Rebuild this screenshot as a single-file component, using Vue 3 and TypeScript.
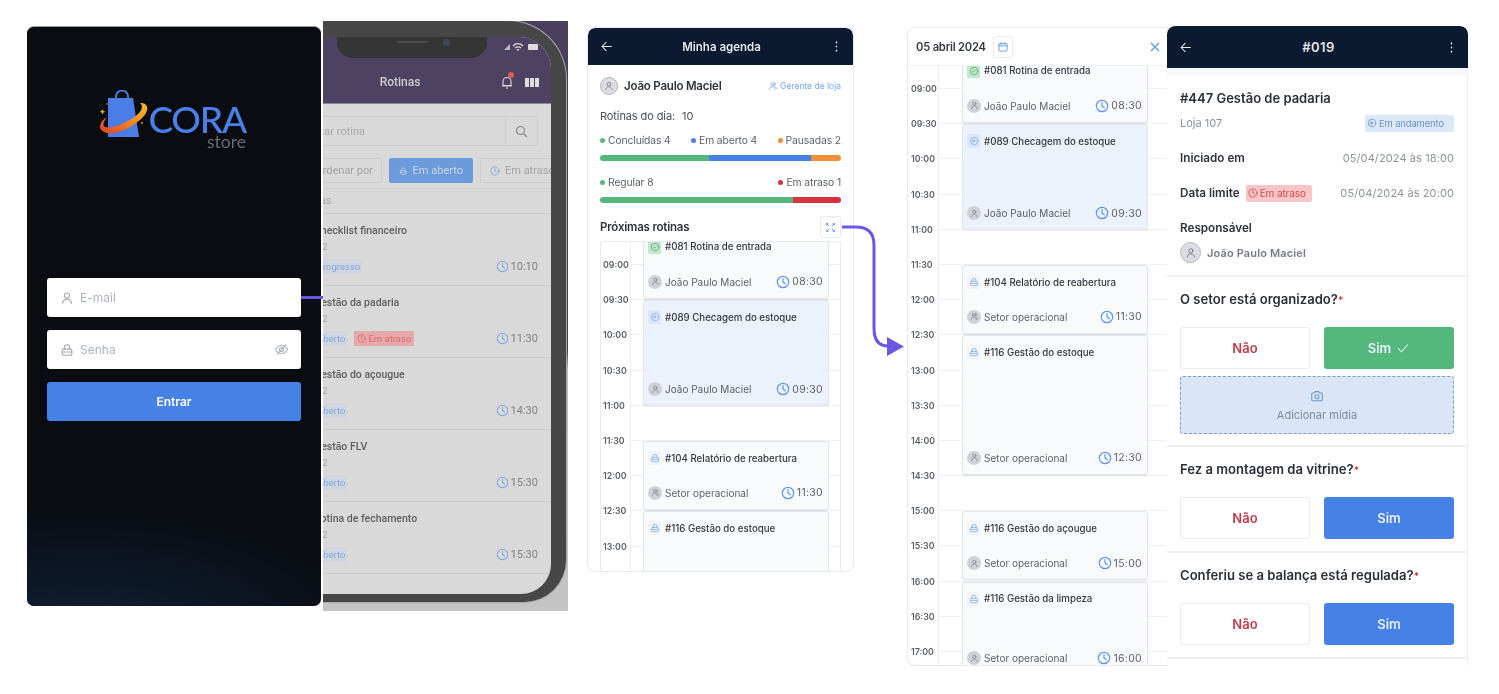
<script setup lang="ts">
interface Ev { start: number; end: number; icon: string; tone: string; title: string; who: string; time: string; av: string }

const slot = 35.2

const agendaTimes = ['09:00','09:30','10:00','10:30','11:00','11:30','12:00','12:30','13:00']
const calTimes = ['09:00','09:30','10:00','10:30','11:00','11:30','12:00','12:30','13:00','13:30','14:00','14:30','15:00','15:30','16:00','16:30','17:00']

const agendaEvents: Ev[] = [
  { start: -1, end: 1, icon: 'i-check', tone: 'green', title: '#081 Rotina de entrada', who: 'João Paulo Maciel', time: '08:30', av: 'i-user' },
  { start: 1, end: 4.06, icon: 'i-play', tone: 'blue', title: '#089 Checagem do estoque', who: 'João Paulo Maciel', time: '09:30', av: 'i-user' },
  { start: 5, end: 7, icon: 'i-lock', tone: 'plain', title: '#104 Relatório de reabertura', who: 'Setor operacional', time: '11:30', av: 'i-team' },
  { start: 7, end: 11, icon: 'i-lock', tone: 'plain', title: '#116 Gestão do estoque', who: '', time: '', av: '' }
]
const calEvents: Ev[] = [
  ...agendaEvents.slice(0, 3),
  { start: 7, end: 11, icon: 'i-lock', tone: 'plain', title: '#116 Gestão do estoque', who: 'Setor operacional', time: '12:30', av: 'i-user' },
  { start: 12, end: 14, icon: 'i-lock', tone: 'plain', title: '#116 Gestão do açougue', who: 'Setor operacional', time: '15:00', av: 'i-user' },
  { start: 14, end: 16.7, icon: 'i-lock', tone: 'plain', title: '#116 Gestão da limpeza', who: 'Setor operacional', time: '16:00', av: 'i-user' }
]

function evStyle(e: Ev, offset: number) {
  return { top: `${offset + e.start * slot + 1}px`, height: `${(e.end - e.start) * slot - 1.6}px` }
}

const phoneRows = [
  { title: 'Checklist financeiro', badge: 'Progresso', late: false, time: '10:10' },
  { title: 'Gestão da padaria', badge: 'Aberto', late: true, time: '11:30' },
  { title: 'Gestão do açougue', badge: 'Aberto', late: false, time: '14:30' },
  { title: 'Gestão FLV', badge: 'Aberto', late: false, time: '15:30' },
  { title: 'Rotina de fechamento', badge: 'Aberto', late: false, time: '15:30' }
]

const questions = [
  { q: 'O setor está organizado?', done: true, h: 170 },
  { q: 'Fez a montagem da vitrine?', done: false, h: 106 },
  { q: 'Conferiu se a balança está regulada?', done: false, h: 106 }
]
</script>

<template>
  <div class="canvas">
    <svg class="defs" width="0" height="0" aria-hidden="true">
      <symbol id="i-user" viewBox="0 0 16 16"><circle cx="8" cy="5.2" r="2.9"/><path d="M2.8 14c.4-3 2.5-4.6 5.2-4.6s4.8 1.6 5.2 4.6"/></symbol>
      <symbol id="i-team" viewBox="0 0 16 16"><circle cx="7" cy="5.2" r="2.6"/><path d="M2.5 13.5c.3-2.7 2-4.2 4.5-4.2s4.2 1.5 4.5 4.2M10.5 3a2.5 2.5 0 0 1 0 4.6M12 9.5c1.2.6 1.9 1.9 2 3.5"/></symbol>
      <symbol id="i-lock" viewBox="0 0 16 16"><rect x="2.5" y="7" width="11" height="7" rx="1.5"/><path d="M5 7V5a3 3 0 0 1 6 0v2M2.5 10.3h11"/></symbol>
      <symbol id="i-clock" viewBox="0 0 16 16"><circle cx="8" cy="8" r="6.5"/><path d="M8 4.2V8l2.6 2"/></symbol>
      <symbol id="i-check" viewBox="0 0 16 16"><circle cx="8" cy="8" r="6"/><path d="M5.4 8.2l1.8 1.8 3.4-3.6"/></symbol>
      <symbol id="i-play" viewBox="0 0 16 16"><circle cx="8" cy="8" r="6"/><path d="M6.8 5.8l3.2 2.2-3.2 2.2z"/></symbol>
      <symbol id="i-back" viewBox="0 0 16 16"><path d="M14 8H2.5M7.5 3l-5 5 5 5"/></symbol>
      <symbol id="i-more" viewBox="0 0 16 16"><path d="M8 2.5v.8M8 7.6v.8M8 12.7v.8"/></symbol>
      <symbol id="i-expand" viewBox="0 0 16 16"><path d="M2.5 2.5l3 3M2.5 2.5h2M2.5 2.500v2M13.500 2.500l-3 3M13.500 2.500h-2M13.500 2.500v2M2.500 13.500l3-3M2.500 13.500h2M2.500 13.500v-2M13.500 13.500l-3-3M13.500 13.500h-2M13.500 13.500v-2"/></symbol>
    </svg>

    <!-- Login -->
    <section class="login">
      <div class="logo">
        <svg class="logo-mark" width="60" height="50" viewBox="0 0 60 50">
          <defs>
            <linearGradient id="sw" x1="0" x2="1" y1="1" y2="0">
              <stop offset="0" stop-color="#e2402c"/>
              <stop offset=".55" stop-color="#f08a25"/>
              <stop offset="1" stop-color="#f6bf2a"/>
            </linearGradient>
          </defs>
          <path d="M21 9V6.5a6 6 0 0 1 12 0V9" fill="none" stroke="#4a7fe8" stroke-width="1.8"/>
          <path d="M13 8h25l6 39H13z" fill="#4a7de6"/>
          <path d="M12 27C5 31 2 39 9 42C17 46 32 40 41 33C50 27 55 19 51 15C49 13 47 13 45 13C49 16 47 22 38 28C29 34 16 39 10 37C7 35 9 31 12 27z" fill="url(#sw)"/>
          <path d="M7.5 19l.8 2 2 .8-2 .8-.8 2-.8-2-2-.8 2-.8z" fill="#f6bf2a"/>
          <circle cx="12" cy="14" r=".8" fill="#f08a25"/>
          <circle cx="47" cy="33" r="1" fill="#c89a2a"/>
        </svg>
        <div class="logo-text">
          <span class="cora">CORA</span>
          <span class="store">store</span>
        </div>
      </div>
      <div class="login-form">
        <div class="field">
          <svg class="ico field-ico"><use href="#i-user"/></svg>
          <span>E-mail</span>
        </div>
        <div class="field">
          <svg class="ico field-ico"><use href="#i-lock"/></svg>
          <span>Senha</span>
          <svg class="eye" viewBox="0 0 16 16"><path d="M1.5 8S4 3.8 8 3.8 14.5 8 14.5 8 12 12.2 8 12.2 1.5 8 1.5 8z"/><circle cx="8" cy="8" r="2.2"/><path d="M13 2.5L3 13.5"/></svg>
        </div>
        <button class="enter">Entrar</button>
      </div>
    </section>

    <!-- Phone mock-up -->
    <section class="phone">
      <div class="frame">
        <div class="notch"><i class="speaker"></i><i class="cam"></i></div>
        <div class="screen">
          <header class="p-head">
            <div class="p-status">
              <svg width="38" height="10" viewBox="0 0 38 10"><path d="M1 8l6-6v6z" fill="#bbb"/><path d="M10 4c3-3 7-3 10 0M12 6c2-1.5 4-1.5 6 0" stroke="#ddd" stroke-width="1.4" fill="none"/><path d="M15 9l-1.6-1.6c1-.7 2.2-.7 3.2 0z" fill="#ddd"/><rect x="25" y="2" width="10" height="6" rx="1" fill="#ddd"/></svg>
            </div>
            <div class="p-bar">
              <span class="p-title">Rotinas</span>
              <span class="p-actions">
                <span class="bell">
                  <svg width="12" height="14" viewBox="0 0 12 14"><path d="M2 10.5V6.5a4 4 0 0 1 8 0v4zM1 11h10M5 13h2" fill="none" stroke="#ddd" stroke-width="1.1"/></svg>
                  <i></i>
                </span>
                <span class="bars"><i></i><i></i><i></i></span>
              </span>
            </div>
          </header>
          <div class="p-search">
            <span class="p-search-text">Buscar rotina</span>
            <span class="p-search-btn"><svg width="13" height="13" viewBox="0 0 13 13"><circle cx="5.5" cy="5.5" r="4" fill="none" stroke="#888" stroke-width="1.2"/><path d="M8.5 8.5l3.5 3.5" stroke="#888" stroke-width="1.2"/></svg></span>
          </div>
          <div class="p-filters">
            <span class="chip order">Ordenar por</span>
            <span class="chip active"><svg class="ico chip-ico"><use href="#i-lock"/></svg>Em aberto</span>
            <span class="chip"><svg class="ico chip-ico c-blue"><use href="#i-clock"/></svg>Em atraso</span>
          </div>
          <div class="p-section">Rotinas</div>
          <article v-for="r in phoneRows" :key="r.title" class="p-row">
            <div class="p-row-title">{{ r.title }}</div>
            <div class="p-row-sub">02</div>
            <div class="p-row-foot">
              <span class="p-badge">{{ r.badge }}</span>
              <span v-if="r.late" class="p-late"><svg class="ico chip-ico"><use href="#i-clock"/></svg>Em atraso</span>
              <span class="p-time"><svg class="ico p-clock"><use href="#i-clock"/></svg>{{ r.time }}</span>
            </div>
          </article>
        </div>
      </div>
    </section>

    <!-- Agenda -->
    <section class="agenda">
      <header class="nav nav-s">
        <svg class="ico nav-ico"><use href="#i-back"/></svg>
        <span class="nav-title">Minha agenda</span>
        <svg class="ico nav-ico more"><use href="#i-more"/></svg>
      </header>
      <div class="ag-body">
        <div class="ag-user">
          <span class="avatar av-18"><svg class="ico"><use href="#i-user"/></svg></span>
          <strong>João Paulo Maciel</strong>
          <span class="role"><svg class="ico role-ico"><use href="#i-team"/></svg>Gerente de loja</span>
        </div>
        <div class="ag-count"><span>Rotinas do dia:</span><span>10</span></div>
        <div class="legend ag-l1">
          <span><i class="dot green"></i>Concluídas 4</span>
          <span><i class="dot blue"></i>Em aberto 4</span>
          <span><i class="dot orange"></i>Pausadas 2</span>
        </div>
        <div class="bar">
          <i class="green" style="width:45.2%"></i>
          <i class="blue" style="width:42.5%"></i>
          <i class="orange" style="width:12.3%"></i>
        </div>
        <div class="legend ag-l2">
          <span><i class="dot green"></i>Regular 8</span>
          <span><i class="dot red"></i>Em atraso 1</span>
        </div>
        <div class="bar">
          <i class="green" style="width:80%"></i>
          <i class="red" style="width:20%"></i>
        </div>
        <div class="ag-next">
          <strong>Próximas rotinas</strong>
          <span class="exp"><svg class="ico"><use href="#i-expand"/></svg></span>
        </div>
        <div class="timeline tl-agenda">
          <div class="tl-rows">
            <div v-for="t in agendaTimes" :key="t" class="tl-row"><span class="tl-label">{{ t }}</span></div>
          </div>
          <article v-for="e in agendaEvents" :key="e.title" class="ev" :class="e.tone" :style="evStyle(e, 22)">
            <div class="ev-top">
              <span class="ev-ico" :class="e.tone"><svg class="ico"><use :href="'#' + e.icon"/></svg></span>
              <span class="ev-title">{{ e.title }}</span>
            </div>
            <div v-if="e.who" class="ev-foot">
              <span class="avatar av-14"><svg class="ico"><use :href="'#' + e.av"/></svg></span>
              <span class="ev-who">{{ e.who }}</span>
              <svg class="ico ev-clock"><use href="#i-clock"/></svg>
              <span class="ev-time">{{ e.time }}</span>
            </div>
          </article>
        </div>
      </div>
    </section>

    <!-- Calendar -->
    <section class="calendar">
      <header class="cal-head">
        <strong>05 abril 2024</strong>
        <span class="cal-btn">
          <svg class="ico" viewBox="0 0 16 16"><rect x="2.5" y="3.5" width="11" height="10" rx="1.5"/><path d="M2.5 6.5h11M5.5 2v2.5M10.5 2v2.5"/></svg>
        </span>
        <svg class="cal-x" viewBox="0 0 12 12"><path d="M2 2l8 8M10 2l-8 8"/></svg>
      </header>
      <div class="timeline tl-cal">
        <div class="tl-rows">
          <div v-for="t in calTimes" :key="t" class="tl-row"><span class="tl-label">{{ t }}</span></div>
        </div>
        <article v-for="e in calEvents" :key="e.title" class="ev" :class="e.tone" :style="evStyle(e, 23)">
          <div class="ev-top">
            <span class="ev-ico" :class="e.tone"><svg class="ico"><use :href="'#' + e.icon"/></svg></span>
            <span class="ev-title">{{ e.title }}</span>
          </div>
          <div class="ev-foot">
            <span class="avatar av-14"><svg class="ico"><use :href="'#' + e.av"/></svg></span>
            <span class="ev-who">{{ e.who }}</span>
            <svg class="ico ev-clock"><use href="#i-clock"/></svg>
            <span class="ev-time">{{ e.time }}</span>
          </div>
        </article>
      </div>
    </section>

    <!-- Detail -->
    <section class="detail">
      <header class="nav nav-l">
        <svg class="ico nav-ico"><use href="#i-back"/></svg>
        <span class="nav-title mono">#019</span>
        <svg class="ico nav-ico more"><use href="#i-more"/></svg>
      </header>
      <div class="d-info">
        <h2>#447 Gestão de padaria</h2>
        <div class="d-line d-loja">
          <span class="muted">Loja 107</span>
          <span class="tag tag-blue"><svg class="ico tag-ico"><use href="#i-play"/></svg>Em andamento</span>
        </div>
        <div class="d-line d-date">
          <b>Iniciado em</b>
          <span class="muted date">05/04/2024 às 18:00</span>
        </div>
        <div class="d-line d-date">
          <span class="d-lim"><b>Data limite</b><span class="tag tag-red"><svg class="ico tag-ico"><use href="#i-clock"/></svg>Em atraso</span></span>
          <span class="muted date">05/04/2024 às 20:00</span>
        </div>
        <div class="d-resp"><b>Responsável</b></div>
        <div class="d-person">
          <span class="avatar av-21"><svg class="ico"><use href="#i-user"/></svg></span>
          <span>João Paulo Maciel</span>
        </div>
      </div>
      <div v-for="q in questions" :key="q.q" class="q" :style="{ height: q.h + 'px' }">
        <div class="q-title">{{ q.q }}<em>*</em></div>
        <div class="q-btns">
          <button class="no">Não</button>
          <button class="yes" :class="{ done: q.done }">Sim<svg v-if="q.done" class="sim-check" viewBox="0 0 16 16"><path d="M2.5 8.5l3.8 3.8L13.5 4"/></svg></button>
        </div>
        <div v-if="q.done" class="media">
          <svg class="cam-ico" viewBox="0 0 16 16"><path d="M2 5.5A1 1 0 0 1 3 4.5h2l1-1.5h4l1 1.5h2a1 1 0 0 1 1 1v7a1 1 0 0 1-1 1H3a1 1 0 0 1-1-1z"/><circle cx="8" cy="8.8" r="2.3"/></svg>
          <span>Adicionar mídia</span>
        </div>
      </div>
    </section>

    <!-- Flow connectors -->
    <svg class="flow" width="1499" height="694" viewBox="0 0 1499 694" aria-hidden="true">
      <path d="M301 297.5H323" fill="none" stroke="#6a58e2" stroke-width="3"/>
      <path d="M842 227H856Q874 227 874 245V328Q874 346 888 346" fill="none" stroke="#6a58e2" stroke-width="3"/>
      <path d="M887 337L904 346.5 887 356z" fill="#6a58e2"/>
    </svg>
  </div>
</template>

<style>
html, body { margin: 0; background: #fff; }
</style>

<style scoped>
.canvas {
  position: relative;
  width: 1499px;
  height: 694px;
  overflow: hidden;
  background: #fff;
  font-family: Inter, "Noto Sans", "Liberation Sans", sans-serif;
  color: #2b2f38;
}
.defs { position: absolute; }
.ico { fill: none; stroke: currentColor; stroke-width: 1.3; stroke-linecap: round; stroke-linejoin: round; }
button { font-family: inherit; cursor: pointer; }
.flow { position: absolute; left: 0; top: 0; pointer-events: none; }

/* login */
.login {
  position: absolute; left: 27px; top: 26px; width: 294px; height: 580px;
  box-sizing: border-box; border-radius: 7px;
  border-top: 1px solid #999;
  background:
    radial-gradient(ellipse 300px 130px at 20% 105%, #0f2136 0%, rgba(12, 22, 38, 0) 100%),
    #0a0c12;
  display: flex; flex-direction: column; filter: blur(.35px);
}
.logo { display: flex; margin: 63px 0 0 68px; height: 62px; }
.logo-mark { flex: none; }
.logo-text { margin-left: -2px; margin-top: 13px; display: flex; flex-direction: column; align-items: flex-end; width: 93px; }
.cora { font-family: Lato, sans-serif; font-size: 37px; line-height: 31px; color: #4a7fe8; letter-spacing: -1.2px; font-weight: 500; white-space: nowrap; }
.store { font-family: Lato, sans-serif; font-size: 17.5px; line-height: 16px; color: #666a74; }
.login-form { margin: 126px 20px 0 20px; display: flex; flex-direction: column; }
.field {
  height: 39px; border-radius: 3px; background: #fff; display: flex; align-items: center;
  padding: 0 12px 0 13px; margin-bottom: 13px; color: #aeb2bc; font-size: 12px;
}
.field-ico { width: 14px; height: 14px; margin-right: 6px; color: #a5a9b4; }
.eye { width: 15px; height: 15px; margin-left: auto; fill: none; stroke: #b0b3bc; stroke-width: 1.1; }
.enter { height: 39px; border: 0; border-radius: 3px; background: #4681e6; color: #fff; font-size: 12px; font-weight: 600; }

/* phone */
.phone {
  position: absolute; left: 323px; top: 21px; width: 245px; height: 590px; overflow: hidden;
  background: linear-gradient(#4a3f5c 0, #4a3f5c 56%, #bdbdbd 59%, #c4c4c4 100%);
  filter: blur(.5px);
}
.frame {
  position: absolute; left: -40px; top: 0; width: 283px; height: 581px; box-sizing: border-box;
  padding: 16px 15px 8px 0; background: #474747;
  border-radius: 0 58px 42px 0; box-shadow: 0 0 0 1px #aaa;
}
.notch {
  position: absolute; left: 54px; top: 16px; width: 150px; height: 21px; z-index: 2;
  background: #353535; border-radius: 0 0 16px 16px;
  display: flex; align-items: flex-start; gap: 15px; padding: 2px 0 0 60px; box-sizing: border-box;
}
.speaker { width: 31px; height: 2px; margin-top: 2px; background: #4c4c4c; border-radius: 2px; }
.cam { width: 7px; height: 7px; background: #3c4858; border-radius: 50%; }
.screen { height: 100%; width: 268px; background: #d9d9d9; border-radius: 0 32px 30px 0; overflow: hidden; font-family: Roboto, Inter, sans-serif; color: #5a5a5a; }
.p-head { height: 67px; background: #4e4262; display: flex; flex-direction: column; border-bottom: 1px solid #8a8a94; box-sizing: border-box; }
.p-status { height: 21px; display: flex; justify-content: flex-end; padding: 5px 10px 0 0; box-sizing: border-box; }
.p-bar { position: relative; display: flex; justify-content: center; align-items: center; height: 32px; margin-top: 8px; width: 100%; }
.p-title { position: absolute; left: 42px; width: 150px; text-align: center; color: #ccc; font-size: 12px; font-weight: 500; }
.p-actions { position: absolute; right: 12px; display: flex; align-items: center; gap: 12px; }
.bell { position: relative; display: flex; }
.bell i { position: absolute; right: -1px; top: -3px; width: 6px; height: 6px; border-radius: 50%; background: #e05a5a; }
.bars { display: flex; gap: 1px; }
.bars i { width: 4px; height: 9px; background: #ddd; }
.p-search {
  margin: 12px 13px 0 6px; height: 30px; box-sizing: border-box; border: 1px solid #cdcdcd; border-radius: 2px;
  display: flex; align-items: center; justify-content: space-between; font-size: 11px; color: #a8a8a8; padding-left: 10px;
}
.p-search-text { white-space: nowrap; }
.p-search-btn { width: 31px; height: 100%; border-left: 1px solid #cdcdcd; display: flex; align-items: center; justify-content: center; }
.p-filters { display: flex; gap: 7px; margin: 12px 0 0 24px; height: 25px; white-space: nowrap; }
.chip {
  display: flex; align-items: center; flex: none; box-sizing: border-box; border: 1px solid #cdcdcd; border-radius: 2px;
  padding: 0 9px; font-size: 11px; color: #a3a3a3; background: #d9d9d9;
}
.chip.order { width: 75px; justify-content: flex-end; padding: 0 8px 0 0; }
.chip.active { width: 84px; background: #6b9bdb; border-color: #6b9bdb; color: #c9d5e6; justify-content: center; }
.chip-ico { width: 10px; height: 10px; margin-right: 5px; }
.chip-ico.c-blue { color: #7aa4dc; }
.p-section { height: 24px; line-height: 24px; border-top: 1px solid #cecece; margin-top: 5px; border-bottom: 1px solid #cecece; font-size: 10.5px; color: #a3a3a3; padding-left: 13px; }
.p-row { height: 72px; box-sizing: border-box; border-bottom: 1px solid #cecece; padding: 10px 13px 0 31px; }
.p-row-title { font-size: 10.5px; font-weight: 500; color: #5e5e5e; line-height: 14px; white-space: nowrap; }
.p-row-sub { font-size: 9.5px; color: #a3a3a3; margin: 3px 0 0 3px; line-height: 12px; }
.p-row-foot { display: flex; align-items: center; height: 16px; margin-top: 5px; font-size: 9.5px; }
.p-badge { background: #cfd6df; color: #7ea7de; padding: 0 2px 0 3px; height: 15px; line-height: 15px; }
.p-late { display: flex; align-items: center; margin-left: 7px; background: #e6a9ab; color: #d96a6a; height: 15px; padding: 0 3px; font-size: 9.5px; }
.p-late .chip-ico { width: 9px; height: 9px; margin-right: 2px; }
.p-time { margin-left: auto; display: flex; align-items: center; font-size: 11px; color: #808080; }
.p-clock { width: 13px; height: 13px; margin-right: 2px; color: #7ea7de; }

/* nav bars */
.nav { display: flex; align-items: center; justify-content: space-between; background: #0b1a30; color: #e4e6ea; padding: 0 10px 0 12px; }
.nav-s { height: 37px; border-radius: 7px 7px 0 0; }
.nav-l { height: 42px; border-radius: 8px 8px 0 0; flex: none; }
.nav-ico { width: 13px; height: 13px; }
.more { stroke-width: 1.8; }
.nav-title { font-size: 11.5px; font-weight: 600; }
.mono { font-size: 13px; letter-spacing: .4px; }

/* agenda */
.agenda {
  position: absolute; left: 588px; top: 28px; width: 265px; height: 543px; box-sizing: border-box;
  border-radius: 7px; box-shadow: 0 0 0 1px #e6e8ef; background: #fff; overflow: hidden;
  display: flex; flex-direction: column; filter: blur(.3px);
}
.ag-body { padding: 0 12px; flex: 1; min-height: 0; display: flex; flex-direction: column; }
.ag-user { display: flex; align-items: center; height: 18px; margin-top: 12px; font-size: 11.5px; }
.ag-user strong { font-weight: 600; margin-left: 6px; letter-spacing: -.2px; color: #2e323a; }
.role { margin-left: auto; display: flex; align-items: center; font-size: 8.5px; color: #7aa7ee; }
.role-ico { width: 10px; height: 10px; margin-right: 2px; }
.avatar { display: flex; align-items: center; justify-content: center; flex: none; border-radius: 50%; background: #cfd1d6; color: #7b7e86; box-sizing: border-box; }
.avatar .ico { width: 62%; height: 62%; }
.av-18 { width: 18px; height: 18px; background: #dcdde2; border: 1px solid #b4b6bd; }
.av-14 { width: 14px; height: 14px; }
.av-21 { width: 21px; height: 21px; background: #dcdde2; border: 1px solid #b4b6bd; }
.ag-count { display: flex; gap: 7px; font-size: 11px; color: #4b4f58; margin-top: 14px; line-height: 14px; letter-spacing: -.1px; }
.legend { display: flex; justify-content: space-between; font-size: 10.3px; line-height: 12px; color: #5c606a; letter-spacing: -.1px; }
.legend span { display: flex; align-items: center; }
.ag-l1 { margin-top: 11px; }
.ag-l2 { margin-top: 15px; }
.dot { width: 5px; height: 5px; border-radius: 50%; margin-right: 3px; flex: none; }
.green { background-color: #54b87c; }
.blue { background-color: #4681e6; }
.orange { background-color: #f0903a; }
.red { background-color: #d6333f; }
.bar { display: flex; height: 6px; border-radius: 3px; overflow: hidden; margin-top: 9px; flex: none; }
.bar i { display: block; height: 100%; }
.ag-next { display: flex; justify-content: space-between; align-items: center; height: 22px; margin-top: 13px; font-size: 11.5px; flex: none; }
.ag-next strong { font-weight: 600; letter-spacing: -.2px; color: #2e323a; }
.exp { width: 21px; height: 22px; border: 1px solid #e8eaf0; border-radius: 3px; box-sizing: border-box; display: flex; align-items: center; justify-content: center; color: #5f97ee; }
.exp .ico { width: 11px; height: 11px; }

/* timeline */
.timeline { position: relative; overflow: hidden; box-sizing: border-box; }
.tl-agenda { height: 330px; margin-top: 3px; border: 1px solid #e9ebf1; border-bottom: 0; border-radius: 3px 3px 0 0; flex: none; }
.tl-rows { padding-top: 23px; background: linear-gradient(#eceef3, #eceef3) 29px 0 / 1px 100% no-repeat; }
.tl-agenda .tl-rows { padding-top: 22px; }
.tl-row { height: 35.2px; box-sizing: border-box; border-top: 1px solid #eef0f4; margin-left: 30px; position: relative; }
.tl-label { position: absolute; left: -28px; top: -6px; font-size: 8.8px; line-height: 12px; font-weight: 600; color: #5a5e66; }
.ev {
  position: absolute; left: 42px; width: 186px; box-sizing: border-box; background: #f9fafc;
  border: 1px solid #e3e5ea; border-radius: 3px; box-shadow: 0 1px 1px rgba(40,50,70,.08);
  padding: 0 5px 0 4px; display: flex; flex-direction: column; justify-content: space-between;
}
.ev.blue { background-color: #ebf2fc; }
.ev.green, .ev.plain { background-color: #f9fafc; }
.ev-top { display: flex; align-items: center; height: 14px; margin-top: 9px; }
.ev-ico { width: 13px; height: 14px; flex: none; margin-right: 4px; display: flex; align-items: center; justify-content: center; border-radius: 2px; color: #73a3ee; }
.ev-ico .ico { width: 10px; height: 10px; stroke-width: 1.1; }
.ev-ico.green { background-color: #bfe8cc; color: #4aa56e; }
.ev-ico.blue { background-color: #dbe7fa; }
.ev-ico.plain { background-color: #f2f4f8; }
.ev-title { font-size: 9.7px; font-weight: 500; color: #333741; white-space: nowrap; }
.ev-foot { display: flex; align-items: center; height: 14px; margin-bottom: 9px; font-size: 10px; color: #5d6169; }
.ev-who { margin-left: 3px; }
.ev-clock { width: 14px; height: 14px; margin-left: auto; color: #5f97ee; stroke-width: 1.4; }
.ev-time { margin-left: 2px; font-size: 10.5px; letter-spacing: .3px; }

/* calendar */
.calendar {
  position: absolute; left: 908px; top: 28px; width: 259px; height: 637px; box-sizing: border-box;
  border-radius: 7px 0 0 7px; box-shadow: 0 0 0 1px #e6e8ef; background: #fff; overflow: hidden;
  display: flex; flex-direction: column; filter: blur(.3px);
}
.cal-head { height: 37px; flex: none; display: flex; align-items: center; padding: 0 6px 0 8px; position: relative; z-index: 1; background: #fff; box-shadow: 0 1px 0 #f1f2f5; }
.cal-head strong { font-size: 11.2px; font-weight: 600; letter-spacing: -.2px; color: #353943; }
.cal-btn { width: 20px; height: 22px; margin-left: 7px; border: 1px solid #e8eaf0; border-radius: 3px; box-sizing: border-box; display: flex; align-items: center; justify-content: center; color: #6c9fee; }
.cal-btn .ico { width: 12px; height: 12px; }
.cal-x { width: 12px; height: 12px; margin-left: auto; fill: none; stroke: #5f97ee; stroke-width: 1.2; }
.tl-cal { flex: 1; min-height: 0; }
.tl-cal .ev { left: 54px; }
.tl-cal .tl-rows { background-position: 30px 0; }
.tl-cal .tl-row { margin-left: 31px; }

/* detail */
.detail {
  position: absolute; left: 1167px; top: 26px; width: 301px; height: 639px; background: #fff;
  border-radius: 8px 8px 0 0; box-shadow: inset -1px 0 0 #eceef1; overflow: hidden;
  display: flex; flex-direction: column; filter: blur(.3px);
}
.d-info { height: 209px; flex: none; box-sizing: border-box; padding: 15px 14px 0 13px; border-top: 7px solid #f6f7f9; border-bottom: 2px solid #f0f1f3; }
.d-info h2 { margin: 0; font-size: 13px; line-height: 17px; font-weight: 600; color: #2b2f38; }
.d-line { display: flex; align-items: center; justify-content: space-between; }
.d-loja { margin-top: 7px; height: 18px; }
.muted { color: #8e929a; font-size: 11px; }
.date { letter-spacing: .1px; font-size: 11px; }
.d-date { height: 18px; margin-top: 17px; }
.d-date b, .d-resp b { font-size: 11.7px; font-weight: 600; color: #2e323a; }
.d-lim { display: flex; align-items: center; gap: 6px; }
.tag { display: flex; align-items: center; height: 17px; padding: 0 2px; font-size: 9.4px; border-radius: 2px; letter-spacing: -.1px; }
.tag-blue { background: #dbe8f8; color: #6d93c9; width: 89px; box-sizing: border-box; }
.tag-red { background: #f9c6c8; color: #cf4a4f; width: 66px; box-sizing: border-box; font-size: 10px; }
.tag-ico { width: 10px; height: 10px; margin-right: 2px; flex: none; }
.d-resp { margin-top: 15px; line-height: 18px; }
.d-person { display: flex; align-items: center; gap: 6px; margin-top: 5px; font-size: 11px; font-weight: 600; color: #777b84; letter-spacing: .15px; }
.q { box-sizing: border-box; padding: 13.5px 14px 0 13px; border-bottom: 2px solid #f0f1f3; flex: none; }
.q-title { font-size: 13.1px; line-height: 17px; font-weight: 600; color: #2b2f38; }
.q-title em { color: #d6333f; font-style: normal; font-size: 10px; }
.q-btns { display: flex; justify-content: space-between; margin-top: 18.5px; }
.q-btns button { width: 130px; height: 42px; border-radius: 3px; font-size: 13px; font-weight: 600; display: flex; align-items: center; justify-content: center; }
.no { background: #fff; border: 1px solid #e8e9ed; color: #bf3d4a; }
.yes { background: #4681e6; border: 0; color: #e8eefa; }
.yes.done { background: #54b87c; }
.sim-check { width: 14px; height: 14px; margin-left: 5px; fill: none; stroke: #e8f5ee; stroke-width: 1.2; }
.media {
  margin-top: 7px; height: 58px; box-sizing: border-box; border: 1px dashed #7d9cc6; border-radius: 3px;
  background: #dae6f7; display: flex; flex-direction: column; align-items: center; justify-content: center; gap: 5px;
  font-size: 11px; color: #7f8a9c;
}
.cam-ico { width: 14px; height: 14px; fill: none; stroke: #6d96c9; stroke-width: 1.2; }
</style>
